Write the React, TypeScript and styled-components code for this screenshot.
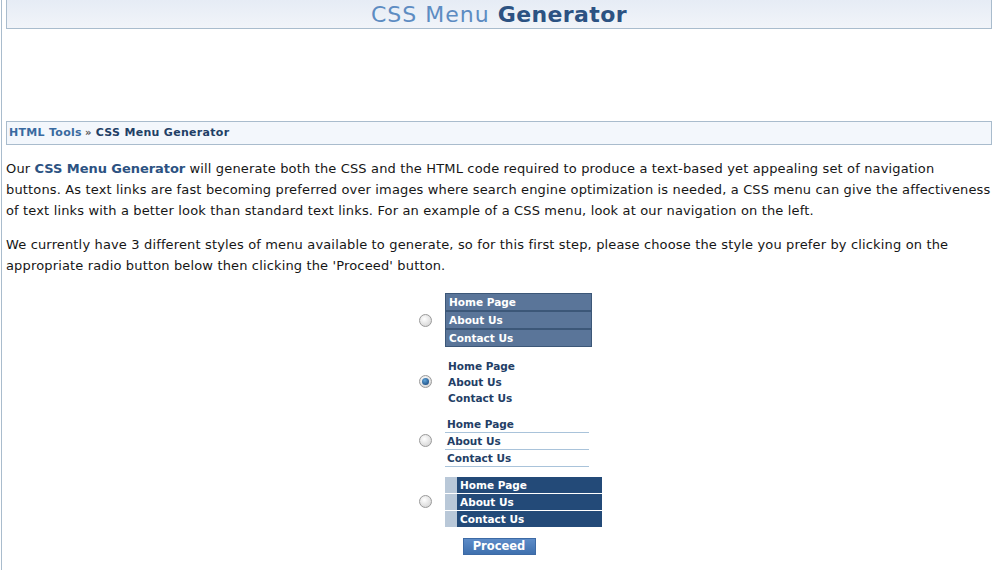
import * as React from "react"
import { useState } from "react"
import styled, { createGlobalStyle } from "styled-components"

const GlobalStyle = createGlobalStyle`
  html, body {
    margin: 0;
    padding: 0;
    background: #ffffff;
  }
  body {
    font-family: "DejaVu Sans", Verdana, sans-serif;
    color: #1a1a1a;
  }
`

const Page = styled.div`
  min-height: 570px;
  border-left: 1px solid #a9bccd;
  margin-left: 1px;
  padding: 0 3px 0 4px;
`

const TitleBar = styled.h1`
  margin: 0;
  height: 28px;
  border: 1px solid #a9bccd;
  border-top: none;
  background: linear-gradient(to bottom, #e6ecf5, #f1f4f9);
  text-align: center;
  font-family: "DejaVu Sans", Verdana, sans-serif;
  font-size: 22px;
  font-weight: normal;
  letter-spacing: 1px;
  line-height: 30px;
  color: #5d8cc2;

  strong {
    color: #2c5282;
    font-weight: bold;
    letter-spacing: 0.4px;
  }
`

const AdSpace = styled.div`
  height: 92px;
`

const Crumbs = styled.div`
  height: 22px;
  border: 1px solid #a9bccd;
  background: #f3f7fc;
  padding-left: 2px;
  font-size: 11px;
  font-weight: bold;
  letter-spacing: 0.3px;
  line-height: 22px;
  color: #1f3f66;
`

const CrumbLink = styled.a`
  color: #3a6aa0;
  text-decoration: none;
`

const Sep = styled.span`
  color: #555;
  font-size: 10px;
  margin: 0 4px 0 3px;
`

const Para = styled.p`
  margin: 13px 0 0 0;
  font-size: 13px;
  letter-spacing: 0.15px;
  line-height: 21px;
  color: #161616;

  & + & {
    margin-top: 13px;
  }
`

const Strong = styled.a`
  color: #2c5282;
  font-weight: bold;
  letter-spacing: -0.05px;
  text-decoration: none;
`

const Options = styled.div`
  display: grid;
  grid-template-columns: 49px 157px;
  width: 206px;
  margin: 17px auto 0 auto;
  row-gap: 10px;
  align-items: center;
`

const RadioCell = styled.label`
  justify-self: end;
  margin-right: 13px;
  display: flex;
`

const Radio = styled.span<{ $on: boolean }>`
  display: block;
  width: 11px;
  height: 11px;
  border-radius: 50%;
  border: 1px solid #9a9a9a;
  background: radial-gradient(circle at 40% 35%, #ffffff, #dcdcdc 70%, #c9c9c9);
  position: relative;
  cursor: pointer;

  &::after {
    content: "";
    display: ${(p) => (p.$on ? "block" : "none")};
    position: absolute;
    left: 2px;
    top: 2px;
    width: 7px;
    height: 7px;
    border-radius: 50%;
    background: radial-gradient(circle at 40% 35%, #5fa4d8, #1d4f86 80%);
  }
`

const MenuList = styled.ul<{ $shift?: number }>`
  list-style: none;
  margin: 0;
  padding: 0;
  font-size: 10.5px;
  font-weight: bold;
  position: relative;
  top: ${(p) => p.$shift ?? 0}px;
`

const BlockItem = styled.li`
  box-sizing: border-box;
  width: 147px;
  height: 18px;
  line-height: 16px;
  background: #5a7599;
  border: 1px solid #3c5778;
  color: #ffffff;
  padding-left: 3px;
`

const PlainItem = styled.li`
  height: 16px;
  line-height: 16px;
  padding-left: 3px;
  color: #233e66;
`

const LineItem = styled.li`
  width: 142px;
  height: 16px;
  line-height: 16px;
  border-bottom: 1px solid #a9c3da;
  padding-left: 2px;
  color: #233e66;
`

const StripItem = styled.li`
  width: 157px;
  height: 16px;
  line-height: 16px;
  background: #234a78;
  border-left: 12px solid #b9c8d8;
  box-sizing: border-box;
  padding-left: 3px;
  color: #ffffff;

  & + & {
    margin-top: 1px;
  }
`

const Proceed = styled.button`
  display: block;
  margin: 12px auto 0 auto;
  width: 73px;
  height: 17px;
  padding: 0;
  border: 1px solid #3d6aa5;
  background: linear-gradient(to bottom, #5d8cc8, #3f70ae);
  color: #ffffff;
  font-family: "DejaVu Sans", Verdana, sans-serif;
  font-size: 11.5px;
  font-weight: bold;
  line-height: 15px;
  cursor: pointer;
`

const items = ["Home Page", "About Us", "Contact Us"]

export default function App() {
  const [choice, setChoice] = useState(1)

  const menus = [
    <MenuList>
      {items.map((t) => (
        <BlockItem key={t}>{t}</BlockItem>
      ))}
    </MenuList>,
    <MenuList $shift={1}>
      {items.map((t) => (
        <PlainItem key={t}>{t}</PlainItem>
      ))}
    </MenuList>,
    <MenuList $shift={1}>
      {items.map((t) => (
        <LineItem key={t}>{t}</LineItem>
      ))}
    </MenuList>,
    <MenuList $shift={1}>
      {items.map((t) => (
        <StripItem key={t}>{t}</StripItem>
      ))}
    </MenuList>,
  ]

  return (
    <>
      <GlobalStyle />
      <Page>
        <TitleBar>
          CSS Menu <strong>Generator</strong>
        </TitleBar>
        <AdSpace />
        <Crumbs>
          <CrumbLink href="#">HTML Tools</CrumbLink>
          <Sep>»</Sep>
          CSS Menu Generator
        </Crumbs>
        <Para>
          Our <Strong href="#">CSS Menu Generator</Strong> will generate both
          the CSS and the HTML code required to produce a text-based yet
          appealing set of navigation buttons. As text links are fast becoming
          preferred over images where search engine optimization is needed, a
          CSS menu can give the affectiveness of text links with a better look
          than standard text links. For an example of a CSS menu, look at our
          navigation on the left.
        </Para>
        <Para>
          We currently have 3 different styles of menu available to generate,
          so for this first step, please choose the style you prefer by
          clicking on the appropriate radio button below then clicking the
          'Proceed' button.
        </Para>
        <Options>
          {menus.map((m, i) => (
            <React.Fragment key={i}>
              <RadioCell onClick={() => setChoice(i)}>
                <Radio $on={choice === i} />
              </RadioCell>
              {m}
            </React.Fragment>
          ))}
        </Options>
        <Proceed>Proceed</Proceed>
      </Page>
    </>
  )
}
